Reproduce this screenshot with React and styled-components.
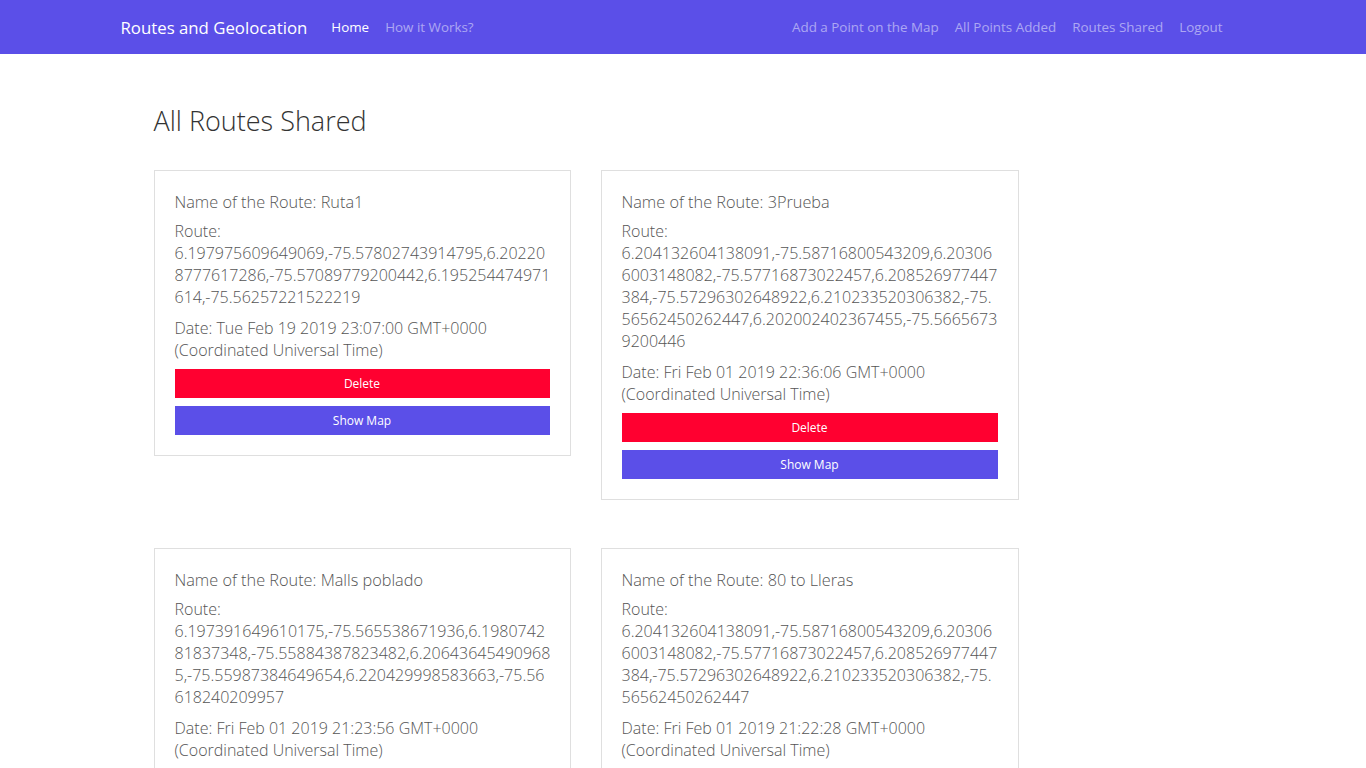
import React from "react";
import styled, { createGlobalStyle } from "styled-components";

const GlobalStyle = createGlobalStyle`
  html, body {
    margin: 0;
    padding: 0;
    background: #fff;
  }
  body {
    font-family: "Open Sans", "Noto Sans", sans-serif;
    color: #555;
  }
  * {
    box-sizing: border-box;
  }
`;

// the reference page keeps 15px on the right for the browser scrollbar
const Container = styled.div`
  width: 1110px;
  margin-left: calc((100% - 15px - 1110px) / 2);
`;

const Navbar = styled.nav`
  background-color: #5b4fe8;
  height: 54px;
`;

const NavInner = styled(Container)`
  height: 100%;
  display: flex;
  align-items: center;
`;

const Brand = styled.a`
  color: #fff;
  font-size: 16.8px;
  margin-right: 16px;
  text-decoration: none;
  white-space: nowrap;
`;

const NavList = styled.ul`
  display: flex;
  list-style: none;
  margin: 0;
  padding: 0;
  margin-left: ${(props) => (props.right ? "auto" : "0")};
`;

const NavLink = styled.a`
  display: block;
  padding: 8px;
  font-size: 13.4px;
  text-decoration: none;
  white-space: nowrap;
  color: ${(props) => (props.active ? "#ffffff" : "rgba(255, 255, 255, 0.5)")};
`;

const Main = styled(Container)`
  padding: 50px 33px 120px;
`;

const Title = styled.h1`
  font-size: 27px;
  font-weight: 300;
  color: #333;
  line-height: 34px;
  margin: 0 0 32px;
`;

const Grid = styled.div`
  display: grid;
  grid-template-columns: 417px 418px;
  column-gap: 30px;
  row-gap: 48px;
  align-items: start;
`;

const Card = styled.div`
  border: 1px solid #dfdfdf;
  padding: 20px;
`;

const CardTitle = styled.h5`
  font-size: 16.3px;
  font-weight: 300;
  line-height: 22px;
  margin: 0 0 7px;
  color: #555;
`;

const Text = styled.p`
  font-size: 16px;
  font-weight: 300;
  line-height: 22px;
  margin: 0 0 ${(props) => props.gap || 8}px;
`;

const Line = styled.span`
  display: block;
  white-space: nowrap;
`;

const Button = styled.button`
  display: block;
  width: 100%;
  height: 29px;
  border: 0;
  border-radius: 0;
  font-family: inherit;
  font-size: 12px;
  color: #fff;
  cursor: pointer;
  background-color: ${(props) => (props.danger ? "#ff0030" : "#5b4fe8")};
  & + & {
    margin-top: 8px;
  }
`;

const routes = [
  {
    name: "Ruta1",
    points: [
      "6.197975609649069,-75.57802743914795,6.20220",
      "8777617286,-75.57089779200442,6.195254474971",
      "614,-75.56257221522219",
    ],
    date: "Tue Feb 19 2019 23:07:00 GMT+0000",
  },
  {
    name: "3Prueba",
    points: [
      "6.204132604138091,-75.58716800543209,6.20306",
      "6003148082,-75.57716873022457,6.208526977447",
      "384,-75.57296302648922,6.210233520306382,-75.",
      "56562450262447,6.202002402367455,-75.5665673",
      "9200446",
    ],
    date: "Fri Feb 01 2019 22:36:06 GMT+0000",
  },
  {
    name: "Malls poblado",
    points: [
      "6.197391649610175,-75.565538671936,6.1980742",
      "81837348,-75.55884387823482,6.20643645490968",
      "5,-75.55987384649654,6.220429998583663,-75.56",
      "618240209957",
    ],
    date: "Fri Feb 01 2019 21:23:56 GMT+0000",
  },
  {
    name: "80 to Lleras",
    points: [
      "6.204132604138091,-75.58716800543209,6.20306",
      "6003148082,-75.57716873022457,6.208526977447",
      "384,-75.57296302648922,6.210233520306382,-75.",
      "56562450262447",
    ],
    date: "Fri Feb 01 2019 21:22:28 GMT+0000",
  },
];

const App = () => {
  return (
    <>
      <GlobalStyle />
      <Navbar>
        <NavInner>
          <Brand href="#">Routes and Geolocation</Brand>
          <NavList>
            <li>
              <NavLink href="#" active>
                Home
              </NavLink>
            </li>
            <li>
              <NavLink href="#">How it Works?</NavLink>
            </li>
          </NavList>
          <NavList right>
            <li>
              <NavLink href="#">Add a Point on the Map</NavLink>
            </li>
            <li>
              <NavLink href="#">All Points Added</NavLink>
            </li>
            <li>
              <NavLink href="#">Routes Shared</NavLink>
            </li>
            <li>
              <NavLink href="#">Logout</NavLink>
            </li>
          </NavList>
        </NavInner>
      </Navbar>
      <Main>
        <Title>All Routes Shared</Title>
        <Grid>
          {routes.map((route) => (
            <Card key={route.name}>
              <CardTitle>Name of the Route: {route.name}</CardTitle>
              <Text gap={9}>
                <Line>Route:</Line>
                {route.points.map((p, i) => (
                  <Line key={i}>{p}</Line>
                ))}
              </Text>
              <Text>
                Date: {route.date}
                <br />
                (Coordinated Universal Time)
              </Text>
              <Button danger>Delete</Button>
              <Button>Show Map</Button>
            </Card>
          ))}
        </Grid>
      </Main>
    </>
  );
};

export default App;
